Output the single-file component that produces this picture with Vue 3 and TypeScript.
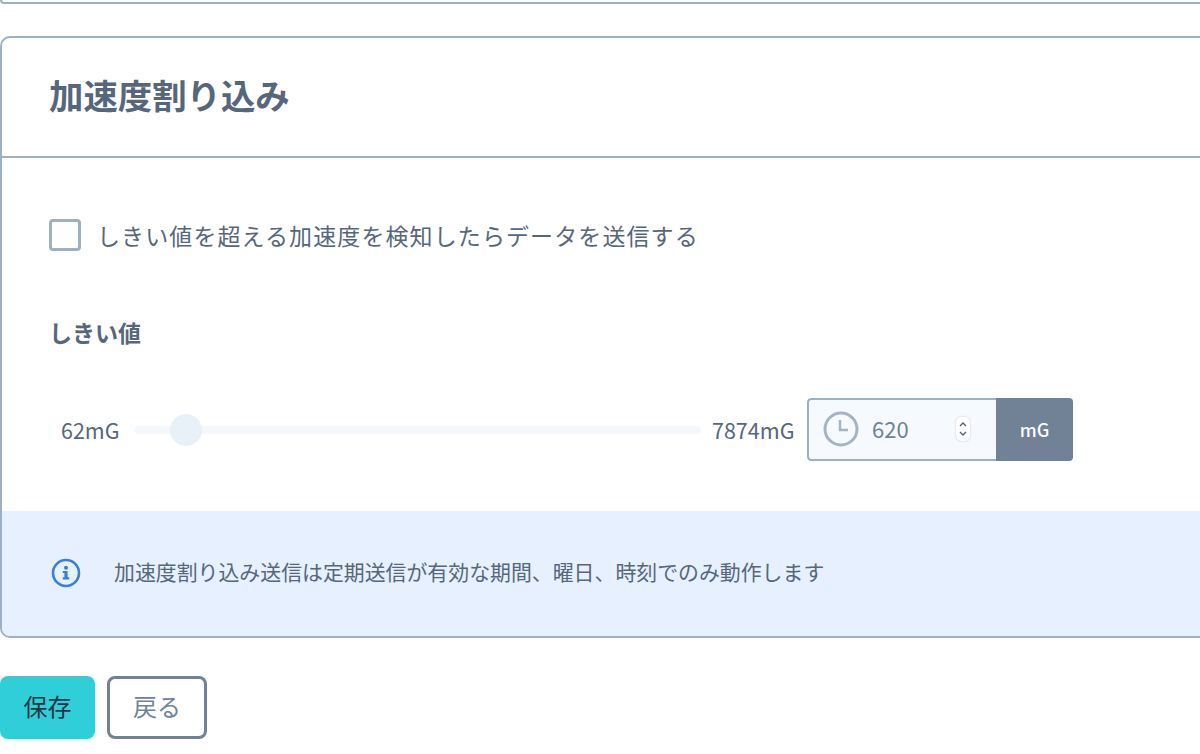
<template>
  <div class="page">
    <div class="prev-card"></div>
    <section class="card">
      <header class="card-header">
        <h2 class="card-title">加速度割り込み</h2>
      </header>
      <div class="card-body">
        <label class="check-row">
          <span class="checkbox"></span>
          <span class="check-label">しきい値を超える加速度を検知したらデータを送信する</span>
        </label>
        <div class="field-label">しきい値</div>
        <div class="slider-row">
          <span class="range-min">{{ min }}mG</span>
          <div class="slider">
            <div class="slider-thumb"></div>
          </div>
          <span class="range-max">{{ max }}mG</span>
          <div class="input-group">
            <div class="input-box">
              <svg class="clock" width="36" height="36" viewBox="0 0 36 36" fill="none" stroke="#a5b4c4" stroke-width="3">
                <circle cx="18" cy="18" r="16" />
                <path d="M17 9v10h8" stroke-width="2.5" />
              </svg>
              <span class="input-value">{{ value }}</span>
              <span class="spinner">
                <svg width="12" height="22" viewBox="0 0 12 22" fill="none" stroke="#55606c" stroke-width="1.3">
                  <path d="M3 8l3-3 3 3M3 14l3 3 3-3" />
                </svg>
              </span>
            </div>
            <div class="unit">mG</div>
          </div>
        </div>
      </div>
      <div class="notice">
        <svg class="info" width="30" height="30" viewBox="0 0 30 30" fill="none">
          <circle cx="15" cy="15" r="13" stroke="#3b7fdc" stroke-width="2.6" />
          <circle cx="15" cy="9.8" r="2" fill="#3b7fdc" />
          <path d="M11.8 13h4.8v6.3h1.6v2.1h-6.4v-2.1h1.6v-4.2h-1.6z" fill="#3b7fdc" />
        </svg>
        <span class="notice-text">加速度割り込み送信は定期送信が有効な期間、曜日、時刻でのみ動作します</span>
      </div>
    </section>
    <div class="actions">
      <button class="btn btn-save">保存</button>
      <button class="btn btn-back">戻る</button>
    </div>
  </div>
</template>

<script setup lang="ts">
import { ref } from 'vue'

const min = ref<number>(62)
const max = ref<number>(7874)
const value = ref<number>(620)
</script>

<style>
html, body {
  overflow: hidden;
  background: #fff;
}
</style>

<style scoped>
.page {
  width: 1210px;
  height: 754px;
  overflow: hidden;
  font-family: "Noto Sans CJK JP", "Noto Sans", sans-serif;
  color: #56677c;
}

.prev-card {
  height: 4px;
  border: 2px solid #9db0c4;
  border-top: none;
  border-radius: 0 0 8px 8px;
  box-sizing: border-box;
}

.card {
  margin-top: 32px;
  height: 602px;
  box-sizing: border-box;
  border: 2px solid #9db0c4;
  border-radius: 10px;
  display: flex;
  flex-direction: column;
  overflow: hidden;
}

.card-header {
  height: 120px;
  flex: none;
  box-sizing: border-box;
  border-bottom: 2px solid #9db0c4;
  padding: 0 0 6px 47px;
  display: flex;
  align-items: center;
}

.card-title {
  margin: 0;
  font-size: 34.4px;
  font-weight: 700;
  color: #56677c;
}

.card-body {
  flex: 1;
  padding: 61px 0 0 47px;
}

.check-row {
  display: flex;
  align-items: center;
  gap: 16px;
  height: 32px;
}

.checkbox {
  width: 32px;
  height: 32px;
  box-sizing: border-box;
  border: 3px solid #9db0c4;
  border-radius: 4px;
}

.check-label {
  font-size: 23px;
  letter-spacing: 1.1px;
}

.field-label {
  margin-top: 65px;
  font-size: 23px;
  font-weight: 700;
  line-height: 32px;
}

.slider-row {
  margin-top: 50px;
  display: flex;
  align-items: center;
  height: 64px;
  font-size: 21.5px;
}

.range-min {
  margin-left: 12px;
  width: 73px;
  padding-bottom: 2px;
}

.slider {
  width: 567px;
  height: 8px;
  border-radius: 4px;
  background: #f4f8fc;
  position: relative;
}

.slider-thumb {
  position: absolute;
  left: 36px;
  top: -12px;
  width: 32px;
  height: 32px;
  border-radius: 50%;
  background: #e8f0f8;
}

.range-max {
  margin-left: 11px;
  width: 95px;
  padding-bottom: 2px;
}

.input-group {
  display: flex;
  align-self: flex-start;
  height: 63px;
  border-radius: 4px;
  overflow: hidden;
}

.input-box {
  width: 189px;
  box-sizing: border-box;
  background: #f6faff;
  border: 2px solid #9db0c4;
  border-right: none;
  border-radius: 4px 0 0 4px;
  display: flex;
  align-items: center;
  padding-left: 14px;
  padding-bottom: 1px;
}

.clock {
  flex: none;
}

.input-value {
  margin-left: 13px;
  font-size: 22px;
  color: #6f8297;
  width: 84px;
  padding-bottom: 2px;
}

.spinner {
  width: 14px;
  height: 24px;
  border-radius: 5px;
  background: #fff;
  box-shadow: 0 0 2px #b8c0c8;
  display: flex;
  align-items: center;
  justify-content: center;
}

.unit {
  width: 77px;
  background: #718297;
  color: #fff;
  font-size: 18px;
  font-weight: 500;
  padding-bottom: 1px;
  box-sizing: border-box;
  display: flex;
  align-items: center;
  justify-content: center;
}

.notice {
  flex: none;
  height: 125px;
  background: #e6f0fe;
  display: flex;
  align-items: center;
  padding-left: 49px;
  padding-bottom: 2px;
  box-sizing: border-box;
}

.notice-text {
  margin-left: 33px;
  font-size: 20.9px;
  padding-bottom: 4px;
}

.actions {
  margin-top: 38px;
  display: flex;
  gap: 12px;
}

.btn {
  height: 63px;
  border-radius: 8px;
  font-family: inherit;
  font-size: 24px;
  padding: 0 0 5px;
  cursor: pointer;
}

.btn-save {
  width: 95px;
  border: none;
  background: #30ced9;
  color: #263543;
}

.btn-back {
  width: 100px;
  box-sizing: border-box;
  background: #fff;
  border: 3px solid #718297;
  color: #718297;
}
</style>
